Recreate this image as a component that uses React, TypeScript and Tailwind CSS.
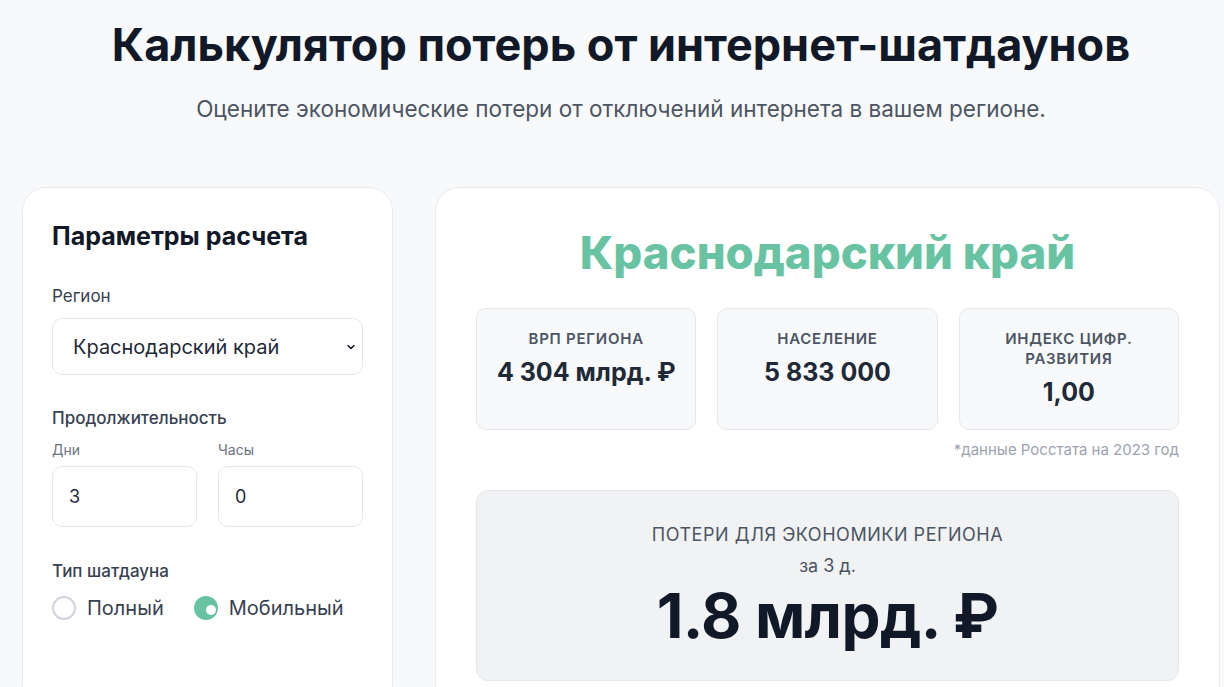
import { ChevronDown } from "lucide-react";

const stats = [
  { label: "ВРП региона", value: "4 304 млрд. ₽" },
  { label: "Население", value: "5 833 000" },
  { label: "Индекс цифр. развития", value: "1,00" },
];

function Radio({ label, checked }: { label: string; checked?: boolean }) {
  return (
    <label className="flex items-center gap-[11px]">
      {checked ? (
        <span className="relative block size-6 rounded-full bg-[#68c3a3]">
          <span className="absolute left-[12px] top-[9px] size-[10px] rounded-full bg-white" />
        </span>
      ) : (
        <span className="block size-6 rounded-full border-2 border-[#d1d5db] bg-white" />
      )}
      <span className="text-[20px] text-[#374151]">{label}</span>
    </label>
  );
}

export default function App() {
  return (
    <div
      className="min-h-screen bg-[#f8f9fa] pl-[22px] pr-[4px] pt-[17px] text-[#1f2937]"
      style={{ fontFamily: "Inter, 'Noto Sans', sans-serif" }}
    >
      <header className="text-center">
        <h1 className="text-[45px] font-bold leading-[56px] text-[#111827]">
          Калькулятор потерь от интернет-шатдаунов
        </h1>
        <p className="mt-[21px] text-[22.5px] leading-[30px] text-[#4b5563]">
          Оцените экономические потери от отключений интернета в вашем регионе.
        </p>
      </header>

      <div className="mt-[63px] flex items-start gap-[42px]">
        <aside className="h-[520px] w-[371px] shrink-0 rounded-[24px] border border-[#e9ebee] bg-white px-[29px] pt-[32px]">
          <h2 className="text-[25px] font-bold leading-[32px] text-[#111827]">
            Параметры расчета
          </h2>

          <p className="mt-[32px] text-[17px] leading-[24px] text-[#374151]">Регион</p>
          <div className="relative mt-[10px]">
            <select
              aria-label="Регион"
              defaultValue="krd"
              className="h-[57px] w-full appearance-none rounded-[10px] border border-[#e5e7eb] bg-white pl-[20px] text-[20px] text-[#1f2937] outline-none"
            >
              <option value="krd">Краснодарский край</option>
            </select>
            <ChevronDown
              className="pointer-events-none absolute right-[6px] top-[23px] size-[12px] text-[#111827]"
              strokeWidth={3}
            />
          </div>

          <p className="mt-[31px] text-[17px] font-medium leading-[24px] text-[#374151]">
            Продолжительность
          </p>
          <div className="mt-[10px] grid grid-cols-2 gap-[21px]">
            <div>
              <p className="text-[14px] leading-[20px] text-[#6b7280]">Дни</p>
              <input
                aria-label="Дни"
                defaultValue="3"
                className="mt-[6px] h-[61px] w-full rounded-[10px] border border-[#e5e7eb] bg-white px-[16px] text-[18px] text-[#1f2937] outline-none"
              />
            </div>
            <div>
              <p className="text-[14px] leading-[20px] text-[#6b7280]">Часы</p>
              <input
                aria-label="Часы"
                defaultValue="0"
                className="mt-[6px] h-[61px] w-full rounded-[10px] border border-[#e5e7eb] bg-white px-[16px] text-[18px] text-[#1f2937] outline-none"
              />
            </div>
          </div>

          <p className="mt-[32px] text-[17px] font-medium leading-[24px] text-[#374151]">
            Тип шатдауна
          </p>
          <div className="mt-[10px] flex items-center gap-[30px]">
            <Radio label="Полный" />
            <Radio label="Мобильный" checked />
          </div>
        </aside>

        <main className="min-w-0 flex-1 rounded-[24px] border border-[#e9ebee] bg-white px-[40px] pb-[40px] pt-[40px]">
          <h2 className="text-center text-[45.5px] font-extrabold leading-[50px] text-[#68c3a3]">
            Краснодарский край
          </h2>

          <div className="mt-[30px] grid grid-cols-3 gap-[21px]">
            {stats.map((s) => (
              <div
                key={s.label}
                className="min-h-[122px] rounded-[10px] border border-[#e5e7eb] bg-[#f8f9fa] px-4 pb-[20px] pt-[20px] text-center"
              >
                <p className="text-[15px] font-semibold uppercase leading-[20px] tracking-[0.05em] text-[#4b5563]">
                  {s.label}
                </p>
                <p className="mt-[7px] text-[25px] font-bold leading-[32px] text-[#1f2937]">
                  {s.value}
                </p>
              </div>
            ))}
          </div>
          <p className="mt-[10px] text-right text-[15px] leading-[20px] text-[#9ca3af]">
            *данные Росстата на 2023 год
          </p>

          <section className="mt-[30px] rounded-[12px] border border-[#e5e7eb] bg-[#f1f2f4] pb-[34px] pt-[32px] text-center">
            <p className="text-[18px] uppercase leading-[24px] tracking-[0.03em] text-[#4b5563]">
              Потери для экономики региона
            </p>
            <p className="mt-[7px] text-[18px] leading-[24px] text-[#4b5563]">за 3 д.</p>
            <p className="mt-[8px] text-[62px] font-bold leading-[60px] tracking-[-0.01em] text-[#111827]">
              1.8 млрд. ₽
            </p>
          </section>
        </main>
      </div>
    </div>
  );
}
